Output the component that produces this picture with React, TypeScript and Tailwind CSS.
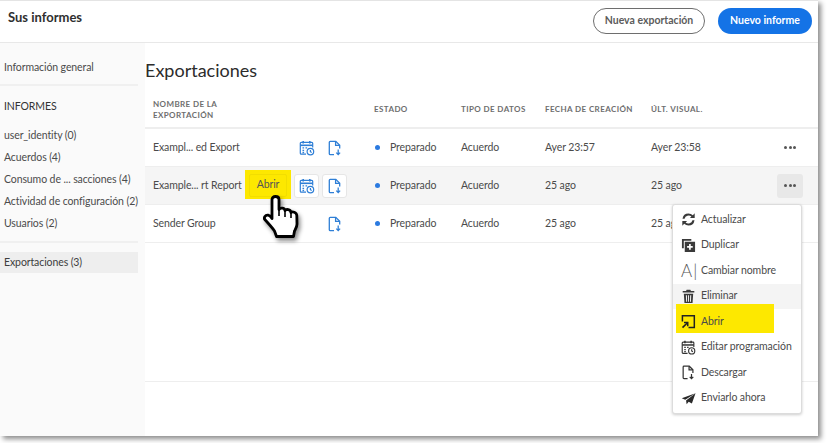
import React from 'react';

const font = { fontFamily: '"Lato", "Noto Sans", sans-serif' };

// Blue row action icons
const CalendarIcon = ({ color = '#2f7fd6', size = 16 }: { color?: string; size?: number }) => (
    <svg width={size} height={size} viewBox="0 0 16 16" fill="none" stroke={color} strokeWidth="1.2">
        <path d="M7 14.2H2.2a.9.9 0 0 1-.9-.9V3.2a.9.9 0 0 1 .9-.9h10.6a.9.9 0 0 1 .9.9V7.5" />
        <path d="M4.2.9v2.6M10.8.9v2.6" strokeWidth="1.6" />
        <path d="M1.3 5.3h12.4" strokeWidth="1.6" />
        <path d="M3.5 7.8h1.6M6.5 7.8h1.6M3.5 10.3h1.6M3.5 12.5h1.6" strokeWidth="1.3" />
        <circle cx="11.4" cy="11.6" r="3.3" />
        <path d="M11.4 9.9v1.8l1.3.8" />
    </svg>
);

const FileIcon = ({ color = '#2f7fd6', size = 16 }: { color?: string; size?: number }) => (
    <svg width={size} height={size} viewBox="0 0 16 16" fill="none" stroke={color} strokeWidth="1.3">
        <path d="M7 14.6H3.2a.9.9 0 0 1-.9-.9V2.2a.9.9 0 0 1 .9-.9h5.6l3.9 3.9v3.2" />
        <path d="M8.6 1.4v3.9h3.9" />
        <path d="M11.2 9.6v4.6M9.3 12.6l1.9 2 1.9-2" />
    </svg>
);

const RefreshIcon = () => (
    <svg width="15" height="15" viewBox="0 0 16 16" fill="#3a3a3a">
        <path d="M8 1.5a6.5 6.5 0 0 0-6.4 5.6h2.2A4.4 4.4 0 0 1 11.1 4.9L9.5 6.5H14.6V1.4l-2 2A6.5 6.5 0 0 0 8 1.5z" />
        <path d="M8 14.5a6.5 6.5 0 0 0 6.4-5.6h-2.2A4.4 4.4 0 0 1 4.9 11.1l1.6-1.6H1.4v5.1l2-2A6.5 6.5 0 0 0 8 14.5z" />
    </svg>
);

const DuplicateIcon = () => (
    <svg width="15" height="15" viewBox="0 0 16 16" fill="#3a3a3a">
        <path d="M1 1h10v2H3v8H1z" />
        <path fillRule="evenodd" d="M4 4h11v11H4zm4.6 2.5v2.1H6.5v1.8h2.1v2.1h1.8v-2.1h2.1V8.6h-2.1V6.5z" />
    </svg>
);

const TrashIcon = () => (
    <svg width="15" height="15" viewBox="0 0 16 16" fill="#3a3a3a">
        <path d="M6 .8h4l.6 1.4h3.6v1.6H1.8V2.2h3.6z" />
        <path fillRule="evenodd" d="M3 5h10l-.7 10H3.7zm2.2 1.6.3 7h1l-.2-7zm2.3 0v7h1v-7zm2.3 0-.2 7h1l.3-7z" />
    </svg>
);

const OpenIcon = () => (
    <svg width="15" height="15" viewBox="0 0 16 16" fill="none" stroke="#222" strokeWidth="1.6">
        <path d="M1.5 8V1.8h12.7v12.7H8" />
        <path d="M1.6 14.6 6.6 9.6" strokeWidth="1.8" />
        <path d="M3.2 9h4v4" />
    </svg>
);

const SendIcon = () => (
    <svg width="15" height="15" viewBox="0 0 16 16" fill="#2a2a2a">
        <path d="M15.5 2.5.8 7.6l3.7 1.8z" />
        <path d="M15.5 2.5 5.4 10l.6 4 2.2-2.6 3.4 1.8z" />
    </svg>
);

const HandCursor = () => (
    <svg width="36" height="44" viewBox="0 0 36 44" className="drop-shadow-[2px_3px_2px_rgba(0,0,0,0.45)]">
        <path
            d="M9 21V4.5C9 2.6 10.4 1.5 12.4 1.5S16 2.6 16 4.5V14.5C17 12.6 21.5 12.6 22 15.5 23 14 27.5 14 28 17.5 29.3 16.4 33.5 17 33.8 20.5L34 29C34 32 32.5 34 31.5 36L30.5 41.5H13.5L11.5 36C9.5 33 5.5 28.5 1.8 24.5.6 22.8 2.2 19.6 5.2 20.2 6.5 20.5 8 22 9 23.5Z"
            fill="#fff"
            stroke="#000"
            strokeWidth="2.8"
            strokeLinejoin="round"
        />
        <path d="M16 14.5V21M22 15.5V22M28 17.5V23" stroke="#000" strokeWidth="1.6" fill="none" />
    </svg>
);

const sideItems = ['user_identity (0)', 'Acuerdos (4)', 'Consumo de ... sacciones (4)', 'Actividad de configuración (2)', 'Usuarios (2)'];

const rows = [
    { name: 'Exampl... ed Export', created: 'Ayer 23:57', viewed: 'Ayer 23:58' },
    { name: 'Example... rt Report', created: '25 ago', viewed: '25 ago', active: true },
    { name: 'Sender Group', created: '25 ago', viewed: '25 ago', noCalendar: true },
];

const menuItems: { label: string; icon: React.ReactNode; hover?: boolean; mark?: boolean }[] = [
    { label: 'Actualizar', icon: <RefreshIcon /> },
    { label: 'Duplicar', icon: <DuplicateIcon /> },
    { label: 'Cambiar nombre', icon: <span className="text-[17px] leading-none font-light text-[#555] tracking-[1px] whitespace-nowrap">A|</span> },
    { label: 'Eliminar', icon: <TrashIcon />, hover: true },
    { label: 'Abrir', icon: <OpenIcon />, mark: true },
    { label: 'Editar programación', icon: <CalendarIcon color="#333" size={15} /> },
    { label: 'Descargar', icon: <FileIcon color="#333" size={15} /> },
    { label: 'Enviarlo ahora', icon: <SendIcon /> },
];

const headerClass = 'text-[8px] font-bold tracking-[0.4px] text-[#6e6e6e] leading-[11.5px]';
const iconBoxClass = 'w-[25px] h-[24px] flex items-center justify-center rounded-[3px]';

export default function App() {
    return (
        <div className="relative w-[830px] h-[443px] bg-white overflow-hidden text-[#4b4b4b]" style={font}>
            <div className="relative w-[818px] h-[436px] flex flex-col bg-white border-t border-[#e4e4e4] shadow-[3px_3px_5px_rgba(0,0,0,0.45)]">
                <header className="h-[42px] shrink-0 flex items-center justify-between pl-2 pr-[6px] pb-[8px] pt-[6px] border-b border-[#e8e8e8]">
                    <h1 className="text-[13px] font-bold text-[#2f2f2f] mb-[5px]">Sus informes</h1>
                    <div className="flex gap-[13px]">
                        <button className="w-[112px] h-[26px] rounded-full border border-[#6e6e6e] text-[10.5px] font-bold text-[#5c5c5c]">Nueva exportación</button>
                        <button className="w-[94px] h-[26px] rounded-full bg-[#1473e6] text-[10.5px] font-bold text-white">Nuevo informe</button>
                    </div>
                </header>
                <div className="flex-1 flex min-h-0">
                    <aside className="w-[145px] shrink-0 bg-[#fafafa] pr-[7px] text-[10.5px] tracking-[-0.1px] text-[#4b4b4b]">
                        <div className="h-[43px] pl-1 pt-[17px] leading-[14px] border-b-2 border-[#f0f0f0]">Información general</div>
                        <div className="pl-1 pt-[13px] leading-[14px] text-[#333]">INFORMES</div>
                        <ul className="pl-1 pt-[11px] pb-[7px] border-b-2 border-[#f0f0f0] whitespace-nowrap">
                            {sideItems.map((item) => (
                                <li key={item} className="h-[22px] leading-[22px]">{item}</li>
                            ))}
                        </ul>
                        <div className="mt-[9px] h-[21px] leading-[21px] pl-1 bg-[#eeeeee] text-[#3d3d3d]">Exportaciones (3)</div>
                    </aside>
                    <main className="flex-1 flex flex-col min-w-0">
                        <h2 className="text-[18px] leading-[24px] text-[#2c2c2c] pt-[15px] h-[46px]">Exportaciones</h2>
                        <div className="h-[40px] flex items-center pl-2 pt-[4px] border-b-2 border-[#eeeeee]">
                            <div className={`w-[221px] ${headerClass}`}>NOMBRE DE LA<br />EXPORTACIÓN</div>
                            <div className={`w-[87px] ${headerClass}`}>ESTADO</div>
                            <div className={`w-[84px] ${headerClass}`}>TIPO DE DATOS</div>
                            <div className={`w-[106px] ${headerClass}`}>FECHA DE CREACIÓN</div>
                            <div className={headerClass}>ÚLT. VISUAL.</div>
                        </div>
                        {rows.map((row) => (
                            <div
                                key={row.name}
                                className={`h-[38px] shrink-0 flex items-center pl-2 text-[10.5px] tracking-[-0.1px] border-b border-[#eeeeee] ${row.active ? 'bg-[#f5f5f5]' : ''}`}
                            >
                                <div className="relative w-[221px] flex items-center">
                                    <span className="whitespace-nowrap">{row.name}</span>
                                    {row.active && (
                                        <span className="absolute left-[92px] -top-[8px] w-[46px] h-[29px] bg-[#fde800] flex items-center justify-center text-[#555]">
                                            <span className="w-[38px] h-[23px] mt-[2px] rounded-[2px] border border-[#f2de00] flex items-center justify-center">Abrir</span>
                                        </span>
                                    )}
                                    <div className="absolute left-[141px] flex gap-[3px]">
                                        <span className={`${iconBoxClass} ${row.active ? 'bg-white border border-[#e6e6e6]' : ''}`}>
                                            {!row.noCalendar && <CalendarIcon />}
                                        </span>
                                        <span className={`${iconBoxClass} ${row.active ? 'bg-white border border-[#e6e6e6]' : ''}`}>
                                            <FileIcon />
                                        </span>
                                    </div>
                                </div>
                                <div className="w-[87px] flex items-center gap-[10px]">
                                    <span className="w-[5px] h-[5px] ml-[1px] rounded-full bg-[#2b7ae0]" />
                                    <span>Preparado</span>
                                </div>
                                <div className="w-[84px]">Acuerdo</div>
                                <div className="w-[106px]">{row.created}</div>
                                <div className="w-[126px] whitespace-nowrap">{row.viewed}</div>
                                <div className={`w-[26px] h-[24px] flex items-center justify-center gap-[1.5px] rounded-[3px] ${row.active ? 'bg-[#e8e8e8]' : ''}`}>
                                    <span className="w-[3px] h-[3px] rounded-full bg-[#555]" />
                                    <span className="w-[3px] h-[3px] rounded-full bg-[#555]" />
                                    <span className="w-[3px] h-[3px] rounded-full bg-[#555]" />
                                </div>
                            </div>
                        ))}
                        <div className="h-[139px] shrink-0 border-b border-[#eeeeee]" />
                    </main>
                </div>

                {/* Context menu sits over the table */}
                <div className="absolute left-[672px] top-[203px] w-[130px] h-[210px] bg-white rounded-[3px] border border-[#dcdcdc] shadow-[0_1px_3px_rgba(0,0,0,0.2)] py-[2px] text-[10.5px] tracking-[-0.1px] text-[#4b4b4b]">
                    {menuItems.map((item) => (
                        <div key={item.label} className="relative h-[25.5px] flex items-center pl-[8px]">
                            {item.hover && <span className="absolute left-0 right-0 top-0 bottom-0 bg-[#f4f4f4]" />}
                            {item.mark && <span className="absolute left-[3px] w-[98px] -top-[5px] h-[29px] bg-[#fde800]" />}
                            <span className="relative w-[20px] shrink-0 flex items-center">{item.icon}</span>
                            <span className="relative whitespace-nowrap">{item.label}</span>
                        </div>
                    ))}
                </div>

                {/* Hand pointer over the Abrir button */}
                <div className="absolute left-[263px] top-[194px]">
                    <HandCursor />
                </div>
            </div>
        </div>
    );
}
